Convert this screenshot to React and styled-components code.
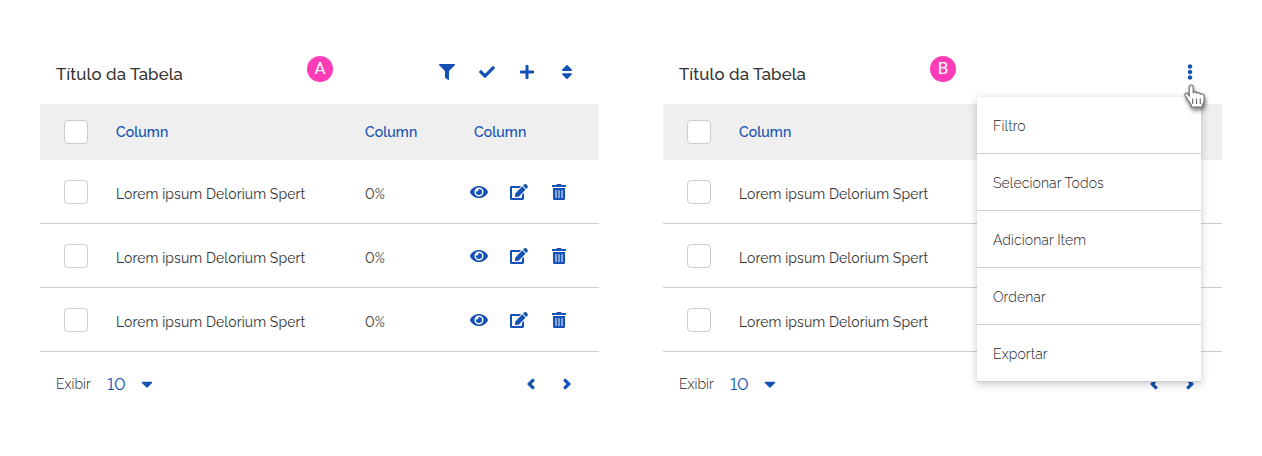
import React from 'react';
import styled, { createGlobalStyle } from 'styled-components';
import {
  FaFilter, FaCheck, FaPlus, FaSort, FaEye, FaEdit, FaTrashAlt,
  FaCaretDown, FaAngleLeft, FaAngleRight, FaEllipsisV,
} from 'react-icons/fa';

const blue = '#1351b4';

const GlobalStyle = createGlobalStyle`
  * { box-sizing: border-box; }
  body {
    margin: 0;
    background: #fff;
    font-family: Raleway, Lato, sans-serif;
    font-variant-numeric: lining-nums;
    color: #333;
  }
`;

const Page = styled.main`
  display: flex;
  gap: 64px;
  height: 456px;
  padding: 40px;
  overflow: hidden;
`;

const Panel = styled.section`
  position: relative;
  width: 559px;
  flex: none;
`;

const TitleBar = styled.header`
  display: flex;
  align-items: center;
  justify-content: space-between;
  height: 64px;
  padding: 0 12px 0 16px;
`;

const Title = styled.h2`
  margin: 4px 0 0;
  font-size: 16.8px;
  line-height: 24px;
  font-weight: 500;
  letter-spacing: 0.12px;
`;

const Badge = styled.span`
  position: absolute;
  left: 267px;
  top: 16px;
  width: 26px;
  height: 26px;
  border-radius: 50%;
  background: #ff3cb8;
  color: #fff;
  font: 400 17px/25px Roboto, sans-serif;
  text-align: center;
`;

const Actions = styled.div`
  display: flex;
`;

const IconButton = styled.button`
  display: flex;
  align-items: center;
  justify-content: center;
  width: ${(p) => p.$width || 40}px;
  height: 32px;
  padding: 0;
  border: 0;
  background: none;
  color: ${blue};
  font-size: ${(p) => p.$size || 16}px;

  svg {
    flex: none;
    overflow: visible;
    stroke-width: ${(p) => p.$stroke || 0}px;
  }
`;

const Row = styled.div`
  display: grid;
  grid-template-columns: 52px 249px 94px 1fr;
  align-items: center;
  height: 64px;
  padding-left: 24px;
  border-bottom: 1px solid #ccc;
  font-size: 14px;
  line-height: 20px;
`;

const HeadRow = styled(Row)`
  grid-template-columns: 52px 249px 109px 1fr;
  height: 56px;
  border: 0;
  background: #efefef;
  color: ${blue};
`;

const Checkbox = styled.span`
  width: 24px;
  height: 24px;
  border: 1px solid #ccc;
  border-radius: 4px;
  background: #fff;
`;

const HeadCell = styled.span`
  font-weight: 500;
  letter-spacing: 0.13px;
  -webkit-text-stroke: 0.15px ${blue};
`;

const Cell = styled.span`
  margin-top: 4px;
  font-weight: 400;
  letter-spacing: 0.09px;
`;

const Footer = styled.footer`
  display: flex;
  align-items: center;
  height: 64px;
  padding: 0 14px 0 16px;
`;

const FooterLabel = styled.span`
  width: 51px;
  font-size: 14px;
  font-weight: 300;
  color: #222;
`;

const PageSize = styled.span`
  width: 28px;
  font-size: 17px;
  font-weight: 400;
  color: ${blue};
`;

const Pager = styled.nav`
  display: flex;
  margin-left: auto;
`;

const Menu = styled.ul`
  position: absolute;
  left: 314px;
  top: 57px;
  width: 224px;
  margin: 0;
  padding: 0;
  list-style: none;
  background: #fff;
  box-shadow: 0 2px 8px rgba(0, 0, 0, 0.22);
`;

const MenuItem = styled.li`
  height: 57px;
  padding: 1px 0 0 16px;
  border-bottom: 1px solid #ccc;
  color: #222;
  font-size: 14px;
  font-weight: 300;
  line-height: 57px;
  letter-spacing: 0.1px;
`;

const Pointer = styled.svg`
  position: absolute;
  left: 520px;
  top: 44px;
  filter: drop-shadow(1px 3px 2px rgba(0, 0, 0, 0.5));
`;

function HandPointer() {
  return (
    <Pointer width="24" height="26" viewBox="0 0 24 26">
      <path
        d="M8.2 1.2C9.3 1.2 10.2 2 10.2 3.1V8.6C11 7.4 13.4 7.6 13.7 9.2C14.7 8.2 16.9 8.5 17.2 10.1C18.4 9.3 21.2 9.8 21.2 12.2V16.2C21.2 18.3 19.8 19.5 19.4 21.4V23H8.3V21.4C7.7 19 5 17.3 3.9 14.2L2 11.5C1.2 9.3 4 8.4 5.1 10.3L6.2 12.2V3.1C6.2 2 7.1 1.2 8.2 1.2Z"
        fill="#fff" stroke="#707070" strokeWidth="1.2" strokeLinejoin="round"
      />
      <path d="M9.7 14.5v5.5M13.5 14.5v5.5M17.3 14.5v5.5" stroke="#707070" strokeWidth="1.2" fill="none" />
    </Pointer>
  );
}

function DataTable({ badge, toolbar, rowActions }) {
  return (
    <>
      <TitleBar>
        <Title>Título da Tabela</Title>
        {toolbar}
      </TitleBar>
      <Badge>{badge}</Badge>
      <HeadRow>
        <Checkbox />
        <HeadCell>Column</HeadCell>
        {rowActions && <HeadCell>Column</HeadCell>}
        {rowActions && <HeadCell>Column</HeadCell>}
      </HeadRow>
      {[0, 1, 2].map((i) => (
        <Row key={i}>
          <Checkbox />
          <Cell>Lorem ipsum Delorium Spert</Cell>
          {rowActions && <Cell>0%</Cell>}
          {rowActions && (
            <Actions>
              <IconButton $size={18}><FaEye /></IconButton>
              <IconButton $size={18}><FaEdit /></IconButton>
              <IconButton><FaTrashAlt /></IconButton>
            </Actions>
          )}
        </Row>
      ))}
      <Footer>
        <FooterLabel>Exibir</FooterLabel>
        <PageSize>10</PageSize>
        <IconButton $width={24} $size={18}><FaCaretDown /></IconButton>
        <Pager>
          <IconButton $width={36} $stroke={32}><FaAngleLeft /></IconButton>
          <IconButton $width={36} $stroke={32}><FaAngleRight /></IconButton>
        </Pager>
      </Footer>
    </>
  );
}

export default function App() {
  return (
    <Page>
      <GlobalStyle />
      <Panel>
        <DataTable
          badge="A"
          rowActions
          toolbar={(
            <Actions>
              <IconButton><FaFilter /></IconButton>
              <IconButton><FaCheck /></IconButton>
              <IconButton><FaPlus /></IconButton>
              <IconButton $size={18}><FaSort /></IconButton>
            </Actions>
          )}
        />
      </Panel>
      <Panel>
        <DataTable badge="B" toolbar={<IconButton><FaEllipsisV /></IconButton>} />
        <Menu>
          <MenuItem>Filtro</MenuItem>
          <MenuItem>Selecionar Todos</MenuItem>
          <MenuItem>Adicionar Item</MenuItem>
          <MenuItem>Ordenar</MenuItem>
          <MenuItem>Exportar</MenuItem>
        </Menu>
        <HandPointer />
      </Panel>
    </Page>
  );
}
